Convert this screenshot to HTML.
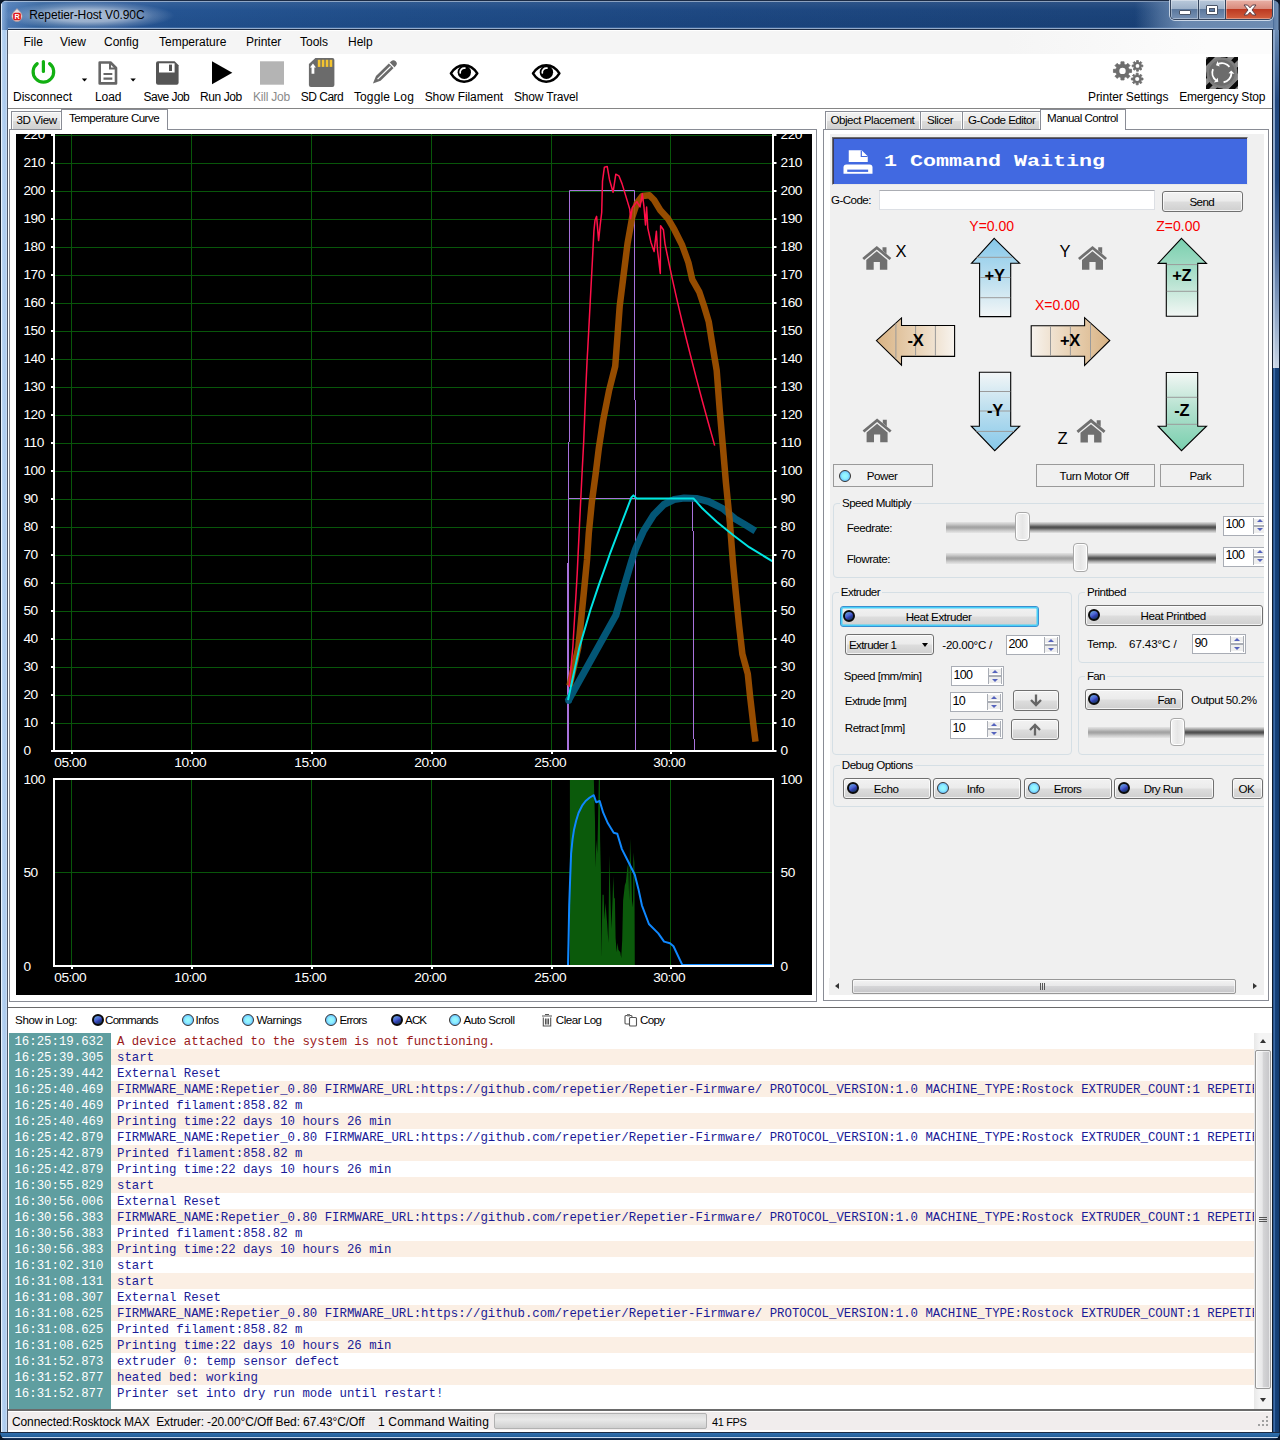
<!DOCTYPE html>
<html lang="en"><head><meta charset="utf-8"><title>Repetier-Host V0.90C</title>
<style>
*{box-sizing:border-box;margin:0;padding:0}
html,body{width:1280px;height:1440px;overflow:hidden;background:#16427a}
body{position:relative;font-family:"Liberation Sans",sans-serif;font-size:12px;color:#000}
.a{position:absolute}
.ui{font-family:"Liberation Sans",sans-serif;font-size:12px;white-space:nowrap}
.ms{font-family:"Liberation Sans",sans-serif;font-size:11.6px;letter-spacing:-0.5px;white-space:nowrap;color:#000}
.mono{font-family:"Liberation Mono",monospace}
.tl{position:absolute;white-space:nowrap;font-size:12px;text-align:center;top:90px;height:14px;line-height:14px}
.btn{position:absolute;border:1px solid #707070;border-radius:3px;background:linear-gradient(#f2f2f2 0%,#ebebeb 48%,#dddddd 52%,#cfcfcf 100%);box-shadow:inset 0 0 0 1px rgba(255,255,255,.75);text-align:center}
.flat{position:absolute;border:1px solid #9a9a9a;background:#f0f0f0;text-align:center}
.led{position:absolute;width:12px;height:12px;border-radius:50%;border:2.1px solid #0a0a0a}
.on{background:linear-gradient(150deg,#5e90d6 18%,#4a60d2 46%,#3342b4 58%,#16385e 88%)}
.off{background:radial-gradient(circle at 50% 50%,#98fbff 0%,#8eeeff 40%,#4a98ff 100%);border-color:#333;border-width:1.6px}
.grp{position:absolute;border:1px solid #d5dfe5;border-radius:4px}
.grp>span{position:absolute;top:-8px;left:6px;background:#f0f0f0;padding:0 2px;line-height:14px}
.num{position:absolute;background:#fff;border:1px solid #a9adb5;height:20px}
.num>span{position:absolute;left:1.5px;top:1.5px;line-height:13px;font-size:12.5px;letter-spacing:-0.75px}
.num>i{position:absolute;right:1px;top:1px;bottom:1px;width:14px;border-left:1px solid #a9adb5;border-right:1px solid #a9adb5;background:linear-gradient(#fff 0,#fff 1px,#eeeeee 1px,#eeeeee 6px,#fff 6px,#fff 7.2px,#a9adb5 7.2px,#a9adb5 8.8px,#fff 8.8px,#fff 9.5px,#eeeeee 9.5px,#eeeeee 15px,#fff 15px)}
.num>i:before{content:"";position:absolute;left:2.8px;top:1.8px;border:3.2px solid transparent;border-top:0;border-bottom:3.4px solid #5563bd}
.num>i:after{content:"";position:absolute;left:2.8px;bottom:2.4px;border:3.2px solid transparent;border-bottom:0;border-top:3.4px solid #5563bd}
.num>b{display:none}
.trk{position:absolute;height:11px}
.thumb{position:absolute;width:15px;height:28.6px;border:1px solid #a8a8a8;border-radius:4px;background:linear-gradient(90deg,#f4f4f4,#e6e6e6 50%,#f4f4f4);box-shadow:inset 0 0 0 1px #fff}
.tab{position:absolute;border:1px solid #898c95;border-bottom:none;box-shadow:inset 1px 1px 0 #fcfcfc,inset -1px 0 0 #fcfcfc;background:linear-gradient(#f2f2f2,#ebebeb 50%,#dddddd 50%,#d0d0d0);text-align:center;line-height:16px}
.tabsel{position:absolute;border:1px solid #898c95;border-bottom:none;background:#fff;text-align:center;line-height:17px}
</style></head><body>
<div class="a" style="left:0;top:0;width:1280px;height:30px;background:linear-gradient(90deg,#5a84bc 0px,#4a78b4 12px,#35659f 40px,#2c5a99 120px,#215190 170px,#1d4b87 400px,#1a4580 700px,#173f75 1280px)"></div><div class="a" style="left:0;top:0;width:1280px;height:30px;background:linear-gradient(180deg,rgba(255,255,255,.10) 0,rgba(255,255,255,.02) 10px,rgba(0,0,0,.04) 30px)"></div><div class="a" style="left:0;top:0;width:1280px;height:1px;background:#1b2b45"></div><div class="a" style="left:1px;top:1px;width:1278px;height:1px;background:rgba(255,255,255,.45)"></div><div class="a" style="left:0;top:30px;width:8px;height:1402px;background:linear-gradient(90deg,#141d2a 0,#141d2a 1px,#e8f1fb 1px,#e8f1fb 2px,#bcd6f3 2px,#a9c9ed 5px,#c4d9f2 6.5px,#c4d9f2 7px,#4c5566 7px,#4c5566 8px)"></div><div class="a" style="left:0;top:0px;width:8px;height:30px;background:linear-gradient(90deg,#141d2a 0,#141d2a 1px,#dfeaf8 1px,#dfeaf8 2px,rgba(160,195,235,.6) 2px,rgba(120,160,210,0) 8px)"></div><div class="a" style="left:1272px;top:30px;width:8px;height:338px;background:#1a2433"></div><div class="a" style="left:1273px;top:30px;width:2px;height:338px;background:linear-gradient(180deg,#8ba6ca 0,#95afd0 60%,#b4c6de 85%,#d4deec 100%)"></div><div class="a" style="left:1275px;top:30px;width:4px;height:338px;background:linear-gradient(180deg,#6e8cb2 0,#4a6c9c 30px,#24497f 70px,#1e457c 150px,#4d6c9c 220px,#9fb3cf 300px,#c9d5e5 338px)"></div><div class="a" style="left:1279px;top:30px;width:1px;height:338px;background:#0e1a2c"></div><div class="a" style="left:1272px;top:368px;width:8px;height:1064px;background:linear-gradient(90deg,#101c2e 0,#101c2e 1px,#16427a 1px,#3c6aa5 2px,#3c6aa5 3px,#16427a 3.5px,#143c70 7px,#0c2240 7px)"></div><div class="a" style="left:1272px;top:0;width:8px;height:30px;background:linear-gradient(90deg,rgba(0,0,0,0) 0,#5f7fa8 2px,#6f8fb5 6px,#1f2f48 7px)"></div><div class="a" style="left:0;top:1432px;width:1280px;height:8px;background:linear-gradient(180deg,#1c2c44 0,#1c2c44 1px,#2f6fae 1px,#27649f 4px,#1f5a96 5.5px,#c9dcf0 5.5px,#c9dcf0 6.5px,#16325a 6.5px,#0d1e38 8px)"></div><svg class="a" style="left:0;top:0" width="1280" height="1440"><path d="M0 0H8A8 8 0 0 0 0 8Z" fill="#0a1628"/><path d="M1280 0H1272A8 8 0 0 1 1280 8Z" fill="#0a1628"/><path d="M0 1440H8A8 8 0 0 1 0 1432Z" fill="#0a1628"/><path d="M1280 1440H1272A8 8 0 0 0 1280 1432Z" fill="#0a1628"/></svg><div class="a" style="left:8px;top:30px;width:1264px;height:1402px;background:#fff"></div>
<div class="a" style="left:6px;top:1px;width:176px;height:28px;background:radial-gradient(ellipse 86px 14px at 47% 52%,rgba(255,255,255,.6) 0,rgba(255,255,255,.5) 45%,rgba(255,255,255,.18) 75%,rgba(255,255,255,0) 100%)"></div><svg class="a" style="left:10.5px;top:8px" width="12" height="14" viewBox="0 0 14 16"><path d="M7 0.5C4.5 3.5 1 5.5 1 9.5A6 6 0 0 0 13 9.5C13 5.5 9.5 3.5 7 0.5Z" fill="#e8e0e0" stroke="#b09090" stroke-width=".8"/><rect x="2.5" y="5.5" width="9" height="8.5" rx="2" fill="#e01818"/><text x="7" y="13" font-family="Liberation Sans,sans-serif" font-weight="bold" font-size="8.5" fill="#fff" text-anchor="middle">R</text></svg><div class="a ui" style="left:29.2px;top:8px;line-height:15px;letter-spacing:-0.105px;color:#000">Repetier-Host V0.90C</div><div class="a" style="left:1135px;top:1px;width:138px;height:28px;background:linear-gradient(90deg,rgba(110,140,178,0) 0,rgba(110,140,178,.55) 25px,rgba(110,140,178,.95) 48px,#6e8cb2 100%)"></div><div class="a" style="left:1169px;top:0;width:105px;height:21px;border:1px solid rgba(235,242,250,.75);border-top:none;border-radius:0 0 6px 6px"></div><div class="a" style="left:1170px;top:0;width:103px;height:20px;border:1px solid #33435c;border-top:none;border-radius:0 0 5px 5px;overflow:hidden"><div class="a" style="left:0;top:0;width:28px;height:19px;background:linear-gradient(#b9c9db 0,#9db1c9 46%,#5b789d 50%,#7791b4 100%);border-right:1px solid #33435c;box-shadow:inset 0 0 0 1px rgba(255,255,255,.35)"></div><div class="a" style="left:28px;top:0;width:27px;height:19px;background:linear-gradient(#b9c9db 0,#9db1c9 46%,#5b789d 50%,#7791b4 100%);border-right:1px solid #33435c;box-shadow:inset 0 0 0 1px rgba(255,255,255,.35)"></div><div class="a" style="left:55px;top:0;width:47px;height:19px;background:linear-gradient(#e9b1a6 0,#d98b7c 46%,#bd3a22 50%,#d3603f 100%);box-shadow:inset 0 0 0 1px rgba(255,255,255,.35)"></div></div><div class="a" style="left:1179px;top:10px;width:12px;height:5px;background:#fff;border:1px solid #4a5568;border-radius:1px"></div><div class="a" style="left:1206px;top:5px;width:12px;height:10px;border:1px solid #4a5568;background:#fff;border-radius:1px"></div><div class="a" style="left:1209px;top:8px;width:6px;height:4px;border:1px solid #4a5568;background:#5f7ca4"></div><svg class="a" style="left:1240.5px;top:3px" width="18" height="14" viewBox="0 0 18 14"><path d="M3 2L6.5 2L9 4.8L11.5 2L15 2L11 7L15 12L11.5 12L9 9.2L6.5 12L3 12L7 7Z" fill="#fff" stroke="#5a4048" stroke-width="1"/></svg>
<div class="a" style="left:8px;top:31px;width:1264px;height:23px;background:linear-gradient(90deg,#f5f5f5 0,#f5f5f5 1000px,#fcfcfc 1200px)"></div><div class="a" style="left:8px;top:29px;width:1265px;height:1px;background:#1d2c44"></div><div class="a" style="left:8px;top:28px;width:1265px;height:1px;background:rgba(200,215,235,.7)"></div><div class="a" style="left:8px;top:27px;width:1265px;height:1px;background:rgba(120,160,210,.25)"></div><div class="a ui" style="left:23.5px;top:35px;line-height:15px">File</div><div class="a ui" style="left:60px;top:35px;line-height:15px">View</div><div class="a ui" style="left:104px;top:35px;line-height:15px">Config</div><div class="a ui" style="left:159px;top:35px;line-height:15px">Temperature</div><div class="a ui" style="left:246px;top:35px;line-height:15px">Printer</div><div class="a ui" style="left:300px;top:35px;line-height:15px">Tools</div><div class="a ui" style="left:348px;top:35px;line-height:15px">Help</div>
<div class="a" style="left:8px;top:108px;width:1264px;height:1px;background:#858585"></div><div class="a ui" style="left:13.1px;top:90px;line-height:14px;letter-spacing:-0.048px;color:#000">Disconnect</div><div class="a ui" style="left:95.1px;top:90px;line-height:14px;letter-spacing:-0.151px;color:#000">Load</div><div class="a ui" style="left:143.6px;top:90px;line-height:14px;letter-spacing:-0.556px;color:#000">Save Job</div><div class="a ui" style="left:199.9px;top:90px;line-height:14px;letter-spacing:-0.386px;color:#000">Run Job</div><div class="a ui" style="left:253.1px;top:90px;line-height:14px;letter-spacing:-0.236px;color:#8a8a8a">Kill Job</div><div class="a ui" style="left:300.8px;top:90px;line-height:14px;letter-spacing:-0.509px;color:#000">SD Card</div><div class="a ui" style="left:353.9px;top:90px;line-height:14px;letter-spacing:0.138px;color:#000">Toggle Log</div><div class="a ui" style="left:424.7px;top:90px;line-height:14px;letter-spacing:-0.075px;color:#000">Show Filament</div><div class="a ui" style="left:514.0px;top:90px;line-height:14px;letter-spacing:-0.176px;color:#000">Show Travel</div><div class="a ui" style="left:1088.1px;top:90px;line-height:14px;letter-spacing:-0.115px;color:#000">Printer Settings</div><div class="a ui" style="left:1179.2px;top:90px;line-height:14px;letter-spacing:-0.187px;color:#000">Emergency Stop</div><svg class="a" style="left:0;top:54px" width="1280" height="54" viewBox="0 54 1280 54"><path d="M37.2 63.6A10.3 10.3 0 1 0 49.6 63.6" fill="none" stroke="#12b012" stroke-width="3.2" stroke-linecap="round"/><path d="M43.4 61.6V71.4" stroke="#12b012" stroke-width="3.2" stroke-linecap="round"/><path d="M81.8 78.6h5.4l-2.7 2.9z" fill="#000"/><path d="M130.4 78.6h5.4l-2.7 2.9z" fill="#000"/><path d="M99.7 62.5H110.5L116 68V83.4H99.7Z" fill="#fff" stroke="#666" stroke-width="2.6" stroke-linejoin="round"/><path d="M110 62.5V68.5H116" fill="none" stroke="#666" stroke-width="2"/><path d="M103.5 74H112.3M103.5 78.7H112.3" stroke="#666" stroke-width="2.2"/><path d="M156 63.2a2 2 0 0 1 2-2H174.6L178.6 65.2V82.7a2 2 0 0 1-2 2H158a2 2 0 0 1-2-2Z" fill="#555"/><rect x="159" y="63.3" width="15.6" height="9.2" fill="#fff"/><rect x="169" y="64.6" width="3" height="6.4" fill="#555"/><path d="M212 61.3L232.3 72.7L212 84.2Z" fill="#000"/><rect x="260" y="61.3" width="24" height="23.4" fill="#b4b4b4"/><path d="M315.4 57.9H332.4a2 2 0 0 1 2 2V85a2 2 0 0 1-2 2H310.9a2 2 0 0 1-2-2V64Z" fill="#6b6b6b"/><rect x="317.80" y="59.8" width="2.6" height="7.1" fill="#f4c430"/><rect x="321.75" y="59.8" width="2.6" height="7.1" fill="#f4c430"/><rect x="325.70" y="59.8" width="2.6" height="7.1" fill="#f4c430"/><rect x="329.65" y="59.8" width="2.6" height="7.1" fill="#f4c430"/><path d="M312.95 63.4l3 4.2h-1.6v6.1h-2.8v-6.1h-1.6z" fill="#fff"/><g transform="translate(372.9,83.6) rotate(-44.2)"><path d="M0 0L7.5 -3.3H28.6a3.3 3.3 0 0 1 0 6.6H7.5Z" fill="#6b6b6b"/><path d="M6.5 0H24.6" stroke="#fff" stroke-width="1.2"/><path d="M26.2 -3.6V3.6" stroke="#fff" stroke-width="1.3"/></g><path d="M450.90000000000003 73.4C457.6 62.4 470.6 62.4 477.3 73.4C470.6 84.4 457.6 84.4 450.90000000000003 73.4Z" fill="#fff" stroke="#000" stroke-width="2.5" stroke-linejoin="round"/><circle cx="464.3" cy="72.3" r="6.7" fill="#000"/><path d="M460.20000000000005 72.9A4.1 4.1 0 0 1 464.90000000000003 68.2" fill="none" stroke="#fff" stroke-width="1.7" stroke-linecap="round"/><path d="M533.0 73.4C539.7 62.4 552.7 62.4 559.4000000000001 73.4C552.7 84.4 539.7 84.4 533.0 73.4Z" fill="#fff" stroke="#000" stroke-width="2.5" stroke-linejoin="round"/><circle cx="546.4000000000001" cy="72.3" r="6.7" fill="#000"/><path d="M542.3000000000001 72.9A4.1 4.1 0 0 1 547.0 68.2" fill="none" stroke="#fff" stroke-width="1.7" stroke-linecap="round"/><path d="M1131.56 69.32L1131.56 72.48L1129.11 72.49L1128.30 74.45L1130.03 76.19L1127.79 78.43L1126.05 76.70L1124.09 77.51L1124.08 79.96L1120.92 79.96L1120.91 77.51L1118.95 76.70L1117.21 78.43L1114.97 76.19L1116.70 74.45L1115.89 72.49L1113.44 72.48L1113.44 69.32L1115.89 69.31L1116.70 67.35L1114.97 65.61L1117.21 63.37L1118.95 65.10L1120.91 64.29L1120.92 61.84L1124.08 61.84L1124.09 64.29L1126.05 65.10L1127.79 63.37L1130.03 65.61L1128.30 67.35L1129.11 69.31Z" fill="#6e6e6e" stroke="#6e6e6e" stroke-width=".8" stroke-linejoin="round"/><circle cx="1122.5" cy="70.9" r="3.2" fill="#fff"/><path d="M1142.82 64.97L1142.82 66.83L1141.29 66.81L1140.83 67.94L1141.92 69.01L1140.61 70.32L1139.54 69.23L1138.41 69.69L1138.43 71.22L1136.57 71.22L1136.59 69.69L1135.46 69.23L1134.39 70.32L1133.08 69.01L1134.17 67.94L1133.71 66.81L1132.18 66.83L1132.18 64.97L1133.71 64.99L1134.17 63.86L1133.08 62.79L1134.39 61.48L1135.46 62.57L1136.59 62.11L1136.57 60.58L1138.43 60.58L1138.41 62.11L1139.54 62.57L1140.61 61.48L1141.92 62.79L1140.83 63.86L1141.29 64.99Z" fill="#6e6e6e" stroke="#6e6e6e" stroke-width=".8" stroke-linejoin="round"/><circle cx="1137.5" cy="65.9" r="1.9" fill="#fff"/><path d="M1143.01 77.99L1143.01 80.01L1141.28 79.98L1140.78 81.19L1142.03 82.39L1140.59 83.83L1139.39 82.58L1138.18 83.08L1138.21 84.81L1136.19 84.81L1136.22 83.08L1135.01 82.58L1133.81 83.83L1132.37 82.39L1133.62 81.19L1133.12 79.98L1131.39 80.01L1131.39 77.99L1133.12 78.02L1133.62 76.81L1132.37 75.61L1133.81 74.17L1135.01 75.42L1136.22 74.92L1136.19 73.19L1138.21 73.19L1138.18 74.92L1139.39 75.42L1140.59 74.17L1142.03 75.61L1140.78 76.81L1141.28 78.02Z" fill="#6e6e6e" stroke="#6e6e6e" stroke-width=".8" stroke-linejoin="round"/><circle cx="1137.2" cy="79" r="2.1" fill="#fff"/><defs><clipPath id="ec"><rect x="1206" y="57" width="32" height="32"/></clipPath></defs><g clip-path="url(#ec)"><rect x="1206" y="57" width="32" height="32" fill="#0a0a0a"/><path d="M1170 89L1202 57H1208.5L1176.5 89Z" fill="#8d8d8d"/><path d="M1183 89L1215 57H1221.5L1189.5 89Z" fill="#8d8d8d"/><path d="M1196 89L1228 57H1234.5L1202.5 89Z" fill="#8d8d8d"/><path d="M1209 89L1241 57H1247.5L1215.5 89Z" fill="#8d8d8d"/><path d="M1222 89L1254 57H1260.5L1228.5 89Z" fill="#8d8d8d"/><path d="M1235 89L1267 57H1273.5L1241.5 89Z" fill="#8d8d8d"/><path d="M1248 89L1280 57H1286.5L1254.5 89Z" fill="#8d8d8d"/><path d="M1261 89L1293 57H1299.5L1267.5 89Z" fill="#8d8d8d"/><path d="M1274 89L1306 57H1312.5L1280.5 89Z" fill="#8d8d8d"/><circle cx="1221.9" cy="72.8" r="15.6" fill="#7e7e7e"/><circle cx="1221.9" cy="72.8" r="13" fill="#6c6c6c"/><path d="M1223.57 82.25A9.6 9.6 0 0 0 1231.49 73.14" fill="none" stroke="#fff" stroke-width="1.8"/><path d="M1231.21 70.48L1234.47 73.68L1228.48 73.26Z" fill="#fff"/><path d="M1229.46 66.89A9.6 9.6 0 0 0 1218.30 63.90" fill="none" stroke="#fff" stroke-width="1.8"/><path d="M1215.99 65.24L1217.59 60.96L1219.64 66.60Z" fill="#fff"/><path d="M1213.00 69.20A9.6 9.6 0 0 0 1215.99 80.36" fill="none" stroke="#fff" stroke-width="1.8"/><path d="M1218.30 81.70L1213.80 82.45L1217.66 77.86Z" fill="#fff"/></g></svg>
<div class="a" style="left:9px;top:129px;width:808px;height:873px;border:1px solid #898c95;background:#fff"></div><div class="tab" style="left:11px;top:111px;width:51px;height:18px"></div><div class="a ms" style="left:16.4px;top:113px;line-height:14px;letter-spacing:-0.374px;">3D View</div><div class="tabsel" style="left:61px;top:109px;width:107px;height:21px"></div><div class="a ms" style="left:69.1px;top:111.3px;line-height:14px;letter-spacing:-0.543px;">Temperature Curve</div><svg class="a" style="left:16px;top:134px" width="796" height="861" viewBox="16 134 796 861" font-family="Liberation Sans,sans-serif" font-size="13.7" letter-spacing="-0.5"><rect x="16" y="134" width="796" height="861" fill="#000"/><path d="M55 723.5H772" stroke="#08560a" stroke-width="1"/><path d="M55 695.5H772" stroke="#08560a" stroke-width="1"/><path d="M55 667.5H772" stroke="#08560a" stroke-width="1"/><path d="M55 639.5H772" stroke="#08560a" stroke-width="1"/><path d="M55 611.5H772" stroke="#08560a" stroke-width="1"/><path d="M55 583.5H772" stroke="#08560a" stroke-width="1"/><path d="M55 555.5H772" stroke="#08560a" stroke-width="1"/><path d="M55 527.5H772" stroke="#08560a" stroke-width="1"/><path d="M55 499.5H772" stroke="#08560a" stroke-width="1"/><path d="M55 471.5H772" stroke="#08560a" stroke-width="1"/><path d="M55 443.5H772" stroke="#08560a" stroke-width="1"/><path d="M55 415.5H772" stroke="#08560a" stroke-width="1"/><path d="M55 387.5H772" stroke="#08560a" stroke-width="1"/><path d="M55 359.5H772" stroke="#08560a" stroke-width="1"/><path d="M55 331.5H772" stroke="#08560a" stroke-width="1"/><path d="M55 303.5H772" stroke="#08560a" stroke-width="1"/><path d="M55 275.5H772" stroke="#08560a" stroke-width="1"/><path d="M55 247.5H772" stroke="#08560a" stroke-width="1"/><path d="M55 219.5H772" stroke="#08560a" stroke-width="1"/><path d="M55 191.5H772" stroke="#08560a" stroke-width="1"/><path d="M55 163.5H772" stroke="#08560a" stroke-width="1"/><path d="M55 135.5H772" stroke="#08560a" stroke-width="1"/><path d="M71.50 134V750" stroke="#08560a" stroke-width="1"/><path d="M71.50 780V965" stroke="#08560a" stroke-width="1"/><path d="M191.50 134V750" stroke="#08560a" stroke-width="1"/><path d="M191.50 780V965" stroke="#08560a" stroke-width="1"/><path d="M311.50 134V750" stroke="#08560a" stroke-width="1"/><path d="M311.50 780V965" stroke="#08560a" stroke-width="1"/><path d="M431.50 134V750" stroke="#08560a" stroke-width="1"/><path d="M431.50 780V965" stroke="#08560a" stroke-width="1"/><path d="M551.50 134V750" stroke="#08560a" stroke-width="1"/><path d="M551.50 780V965" stroke="#08560a" stroke-width="1"/><path d="M670.50 134V750" stroke="#08560a" stroke-width="1"/><path d="M670.50 780V965" stroke="#08560a" stroke-width="1"/><path d="M55 872.5H772" stroke="#08560a" stroke-width="1"/><path d="M569.5 442V190.5H634.5V400M635.5 400V750M568.5 563V442M568.5 498.5H692.5" fill="none" stroke="#a872dc" stroke-width="1"/><path d="M568 750V563" fill="none" stroke="#a872dc" stroke-width="2"/><path d="M692.5 498.5V531M693.5 531V739M694.5 739V750" fill="none" stroke="#a872dc" stroke-width="1"/><path d="M569.9 965.1 L569.9 779.2 L593.8 779.2 L595.0 820.9 L595.5 867.8 L596.4 839.7 L597.3 853.7 L599.0 779.2 L599.7 779.2 L600.1 839.7 L600.9 872.5 L601.3 956.9 L602.5 894.8 L603.7 894.8 L604.4 919.4 L605.5 903.0 L607.2 924.0 L608.4 942.8 L609.3 854.9 L610.0 881.9 L611.4 928.7 L612.6 898.3 L613.3 876.0 L614.2 898.3 L614.9 898.3 L615.6 938.1 L616.6 952.2 L617.5 942.8 L618.4 949.8 L620.3 952.2 L621.2 958.0 L622.2 940.5 L623.1 900.6 L624.8 885.4 L625.9 881.9 L627.3 867.8 L628.3 863.1 L629.2 900.6 L630.1 838.5 L631.1 867.8 L632.0 900.6 L633.0 907.6 L633.4 852.6 L634.4 863.1 L634.8 965.1Z" fill="#0b5a0b"/><path d="M599.3 780V850" stroke="#0b5a0b" stroke-width="1"/><path d="M568.0 965.1 L568.5 942.8 L569.2 905.3 L570.2 877.2 L571.1 853.7 L572.5 839.7 L573.9 830.3 L576.2 820.5 L578.6 812.7 L582.1 805.7 L585.6 801.0 L589.8 797.5 L593.8 795.2 L596.2 802.2 L599.7 801.0 L603.2 812.7 L607.9 823.3 L613.7 832.7 L617.3 833.8 L621.9 849.1 L627.8 860.8 L634.8 874.8 L638.4 888.9 L641.9 905.3 L648.9 924.0 L658.3 933.4 L664.1 941.6 L670.0 943.3 L673.5 946.3 L682.4 965.1 L773.1 965.1" fill="none" stroke="#0f88ff" stroke-width="2" stroke-linejoin="round"/><g opacity=".92"><path d="M567.8 701.5 L615.9 615.3 L622.2 592.8 L631.9 560.0 L635.5 549.2 L643.6 530.9 L653.8 514.7 L663.9 504.5 L674.1 499.5 L684.2 498.0 L696.4 498.4 L708.6 501.5 L722.8 508.6 L735.0 518.8 L745.2 524.8 L755.3 530.9" fill="none" stroke="#045e80" stroke-width="7" stroke-linejoin="round"/><circle cx="568.6" cy="700.6" r="3.4" fill="#045e80"/></g><path d="M569.5 685.8 L578.3 647.5 L583.8 592.8 L587.0 560.0 L588.8 533.0 L591.8 502.5 L595.9 472.0 L598.9 447.7 L603.0 421.2 L609.0 390.8 L615.2 366.4 L617.2 340.0 L619.7 306.2 L623.6 275.0 L627.5 243.8 L632.2 217.2 L636.9 203.1 L642.3 196.1 L649.4 195.3 L654.1 200.0 L660.3 210.2 L668.1 218.8 L674.4 229.7 L682.2 245.3 L688.4 262.5 L692.3 279.7 L699.4 292.2 L704.1 306.2 L708.8 321.9 L711.6 340.0 L716.7 370.5 L719.8 411.1 L722.8 445.6 L725.9 482.2 L729.9 522.8 L733.0 563.4 L735.8 592.8 L739.1 625.6 L742.4 654.1 L747.8 673.8 L750.0 695.6 L753.3 724.1 L755.5 741.6" fill="none" stroke="#a65400" stroke-width="6.5" stroke-linejoin="round" opacity=".9"/><path d="M568.0 700.0 L579.4 647.5 L590.3 610.3 L599.1 584.1 L607.8 560.0 L610.1 553.3 L620.5 526.0 L631.4 497.4 L633.4 495.4 L636.5 498.4 L693.4 498.4 L702.5 508.6 L716.7 521.8 L733.0 535.0 L749.2 547.2 L772.6 561.4" fill="none" stroke="#00e4e4" stroke-width="2" stroke-linejoin="round"/><path d="M569.1 686.9 L572.8 647.5 L576.1 592.8 L577.2 573.6 L579.6 522.8 L581.6 482.2 L583.7 441.6 L585.7 390.8 L587.1 360.3 L587.7 350.0 L590.0 306.2 L592.3 262.5 L593.9 231.2 L595.0 220.3 L596.6 216.4 L598.6 240.6 L600.2 225.0 L601.7 212.5 L602.5 181.2 L604.4 167.2 L607.2 166.4 L609.5 179.7 L613.1 192.2 L615.8 174.2 L618.9 175.8 L622.0 183.6 L627.5 201.6 L629.8 209.4 L630.6 218.8 L632.2 207.8 L636.9 201.6 L640.0 207.0 L642.3 193.8 L643.9 206.2 L645.5 225.0 L646.6 207.0 L647.8 228.1 L650.9 242.2 L654.1 251.6 L656.4 231.2 L657.5 250.0 L660.3 273.4 L660.6 225.8 L663.4 229.7 L665.0 243.8 L668.6 261.3 L672.4 279.4 L676.6 298.1 L681.1 317.4 L685.9 337.3 L691.1 357.8 L696.5 378.9 L702.2 400.5 L708.3 422.8 L714.7 445.6" fill="none" stroke="#ff1048" stroke-width="1.5" stroke-linejoin="round"/><path d="M54 134V752M773 134V752M53 751H774" stroke="#fff" stroke-width="2" fill="none"/><path d="M51 751H54M774 751H776.5" stroke="#fff" stroke-width="2"/><path d="M51 723H54M774 723H776.5" stroke="#fff" stroke-width="2"/><path d="M51 695H54M774 695H776.5" stroke="#fff" stroke-width="2"/><path d="M51 667H54M774 667H776.5" stroke="#fff" stroke-width="2"/><path d="M51 639H54M774 639H776.5" stroke="#fff" stroke-width="2"/><path d="M51 611H54M774 611H776.5" stroke="#fff" stroke-width="2"/><path d="M51 583H54M774 583H776.5" stroke="#fff" stroke-width="2"/><path d="M51 555H54M774 555H776.5" stroke="#fff" stroke-width="2"/><path d="M51 527H54M774 527H776.5" stroke="#fff" stroke-width="2"/><path d="M51 499H54M774 499H776.5" stroke="#fff" stroke-width="2"/><path d="M51 471H54M774 471H776.5" stroke="#fff" stroke-width="2"/><path d="M51 443H54M774 443H776.5" stroke="#fff" stroke-width="2"/><path d="M51 415H54M774 415H776.5" stroke="#fff" stroke-width="2"/><path d="M51 387H54M774 387H776.5" stroke="#fff" stroke-width="2"/><path d="M51 359H54M774 359H776.5" stroke="#fff" stroke-width="2"/><path d="M51 331H54M774 331H776.5" stroke="#fff" stroke-width="2"/><path d="M51 303H54M774 303H776.5" stroke="#fff" stroke-width="2"/><path d="M51 275H54M774 275H776.5" stroke="#fff" stroke-width="2"/><path d="M51 247H54M774 247H776.5" stroke="#fff" stroke-width="2"/><path d="M51 219H54M774 219H776.5" stroke="#fff" stroke-width="2"/><path d="M51 191H54M774 191H776.5" stroke="#fff" stroke-width="2"/><path d="M51 163H54M774 163H776.5" stroke="#fff" stroke-width="2"/><path d="M51 135H54M774 135H776.5" stroke="#fff" stroke-width="2"/><path d="M72.00 752V754M72.00 967V969" stroke="#fff" stroke-width="2"/><path d="M192.00 752V754M192.00 967V969" stroke="#fff" stroke-width="2"/><path d="M312.00 752V754M312.00 967V969" stroke="#fff" stroke-width="2"/><path d="M432.00 752V754M432.00 967V969" stroke="#fff" stroke-width="2"/><path d="M552.00 752V754M552.00 967V969" stroke="#fff" stroke-width="2"/><path d="M671.00 752V754M671.00 967V969" stroke="#fff" stroke-width="2"/><rect x="54" y="779" width="719" height="187" fill="none" stroke="#fff" stroke-width="2"/><text x="23.5" y="754.7" fill="#fff">0</text><text x="780.6" y="754.7" fill="#fff">0</text><text x="23.5" y="726.7" fill="#fff">10</text><text x="780.6" y="726.7" fill="#fff">10</text><text x="23.5" y="698.7" fill="#fff">20</text><text x="780.6" y="698.7" fill="#fff">20</text><text x="23.5" y="670.7" fill="#fff">30</text><text x="780.6" y="670.7" fill="#fff">30</text><text x="23.5" y="642.7" fill="#fff">40</text><text x="780.6" y="642.7" fill="#fff">40</text><text x="23.5" y="614.7" fill="#fff">50</text><text x="780.6" y="614.7" fill="#fff">50</text><text x="23.5" y="586.7" fill="#fff">60</text><text x="780.6" y="586.7" fill="#fff">60</text><text x="23.5" y="558.7" fill="#fff">70</text><text x="780.6" y="558.7" fill="#fff">70</text><text x="23.5" y="530.7" fill="#fff">80</text><text x="780.6" y="530.7" fill="#fff">80</text><text x="23.5" y="502.7" fill="#fff">90</text><text x="780.6" y="502.7" fill="#fff">90</text><text x="23.5" y="474.7" fill="#fff">100</text><text x="780.6" y="474.7" fill="#fff">100</text><text x="23.5" y="446.7" fill="#fff">110</text><text x="780.6" y="446.7" fill="#fff">110</text><text x="23.5" y="418.7" fill="#fff">120</text><text x="780.6" y="418.7" fill="#fff">120</text><text x="23.5" y="390.7" fill="#fff">130</text><text x="780.6" y="390.7" fill="#fff">130</text><text x="23.5" y="362.7" fill="#fff">140</text><text x="780.6" y="362.7" fill="#fff">140</text><text x="23.5" y="334.7" fill="#fff">150</text><text x="780.6" y="334.7" fill="#fff">150</text><text x="23.5" y="306.7" fill="#fff">160</text><text x="780.6" y="306.7" fill="#fff">160</text><text x="23.5" y="278.7" fill="#fff">170</text><text x="780.6" y="278.7" fill="#fff">170</text><text x="23.5" y="250.7" fill="#fff">180</text><text x="780.6" y="250.7" fill="#fff">180</text><text x="23.5" y="222.7" fill="#fff">190</text><text x="780.6" y="222.7" fill="#fff">190</text><text x="23.5" y="194.7" fill="#fff">200</text><text x="780.6" y="194.7" fill="#fff">200</text><text x="23.5" y="166.7" fill="#fff">210</text><text x="780.6" y="166.7" fill="#fff">210</text><text x="23.5" y="138.7" fill="#fff">220</text><text x="780.6" y="138.7" fill="#fff">220</text><text x="23.5" y="783.6" fill="#fff">100</text><text x="780.6" y="783.6" fill="#fff">100</text><text x="23.5" y="876.6" fill="#fff">50</text><text x="780.6" y="876.6" fill="#fff">50</text><text x="23.5" y="970.6" fill="#fff">0</text><text x="780.6" y="970.6" fill="#fff">0</text><text x="54.3" y="767.3" fill="#fff">05:00</text><text x="54.3" y="982" fill="#fff">05:00</text><text x="174.3" y="767.3" fill="#fff">10:00</text><text x="174.3" y="982" fill="#fff">10:00</text><text x="294.3" y="767.3" fill="#fff">15:00</text><text x="294.3" y="982" fill="#fff">15:00</text><text x="414.3" y="767.3" fill="#fff">20:00</text><text x="414.3" y="982" fill="#fff">20:00</text><text x="534.3" y="767.3" fill="#fff">25:00</text><text x="534.3" y="982" fill="#fff">25:00</text><text x="653.3" y="767.3" fill="#fff">30:00</text><text x="653.3" y="982" fill="#fff">30:00</text></svg>
<div class="a" style="left:823px;top:129px;width:446px;height:872px;border:1px solid #898c95;background:#fff"></div><div class="a" style="left:830px;top:134px;width:434px;height:861px;background:#f0f0f0;overflow:hidden" id="rp"></div><div class="tab" style="left:825px;top:111px;width:96px;height:18px"></div><div class="a ms" style="left:830.4px;top:113px;line-height:14px;letter-spacing:-0.470px;">Object Placement</div><div class="tab" style="left:920px;top:111px;width:43px;height:18px"></div><div class="a ms" style="left:927.0px;top:113px;line-height:14px;letter-spacing:-0.500px;">Slicer</div><div class="tab" style="left:962px;top:111px;width:79px;height:18px"></div><div class="a ms" style="left:968.1px;top:113px;line-height:14px;letter-spacing:-0.535px;">G-Code Editor</div><div class="tabsel" style="left:1040px;top:109px;width:86px;height:21px"></div><div class="a ms" style="left:1047.1px;top:111.3px;line-height:14px;letter-spacing:-0.559px;">Manual Control</div><div class="a" style="left:832px;top:137px;width:416px;height:48px;background:#4169e1;border:1px solid;border-color:#6d6d6d #e8e8e8 #e8e8e8 #6d6d6d;box-shadow:inset 1px 1px 0 #3a3a5a"></div><svg class="a" style="left:840px;top:146px" width="40" height="32" viewBox="840 146 40 32"><path d="M848.75 150.25H861.6L867.75 156.2V162H848.75Z" fill="#fff"/><path d="M861.3 150.4V156.5H867.6" fill="none" stroke="#4169e1" stroke-width="1.2"/><path d="M846.5 164.4H869.5a3 3 0 0 1 3 3V173.75H843.5V167.4a3 3 0 0 1 3-3Z" fill="#fff"/><rect x="847.25" y="169.6" width="20.9" height="2.3" fill="#4169e1"/></svg><div class="a mono" style="left:884.3px;top:149.5px;line-height:24px;font-size:17.25px;font-weight:bold;color:#fff;white-space:nowrap;transform:scale(1.256,1.0);transform-origin:0 50%">1 Command Waiting</div><div class="a ms" style="left:831.0px;top:193px;line-height:14px;letter-spacing:-0.575px;">G-Code:</div><div class="a" style="left:879px;top:190px;width:276px;height:20px;background:#fff;border:1px solid #dcdfe4;border-top-color:#abadb3"></div><div class="btn" style="left:1162px;top:191px;width:81px;height:21px"></div><div class="a ms" style="left:1189.5px;top:194.5px;line-height:14px;letter-spacing:-0.645px;">Send</div><svg class="a" style="left:829px;top:214px" width="435" height="250" viewBox="829 214 435 250" font-family="Liberation Sans,sans-serif"><defs>
<linearGradient id="gyu" x1="0" y1="0" x2="0" y2="1"><stop offset="0" stop-color="#86c8ea"/><stop offset=".55" stop-color="#bfe0ef"/><stop offset="1" stop-color="#f3f6f7"/></linearGradient>
<linearGradient id="gyd" x1="0" y1="1" x2="0" y2="0"><stop offset="0" stop-color="#86c8ea"/><stop offset=".55" stop-color="#bfe0ef"/><stop offset="1" stop-color="#f3f6f7"/></linearGradient>
<linearGradient id="gzu" x1="0" y1="0" x2="0" y2="1"><stop offset="0" stop-color="#79cfae"/><stop offset=".55" stop-color="#b6e2d0"/><stop offset="1" stop-color="#f3f7f5"/></linearGradient>
<linearGradient id="gzd" x1="0" y1="1" x2="0" y2="0"><stop offset="0" stop-color="#79cfae"/><stop offset=".55" stop-color="#b6e2d0"/><stop offset="1" stop-color="#f3f7f5"/></linearGradient>
<linearGradient id="gxl" x1="0" y1="0" x2="1" y2="0"><stop offset="0" stop-color="#d8b283"/><stop offset=".55" stop-color="#ead5ba"/><stop offset="1" stop-color="#f7f3ee"/></linearGradient>
<linearGradient id="gxr" x1="1" y1="0" x2="0" y2="0"><stop offset="0" stop-color="#d8b283"/><stop offset=".55" stop-color="#ead5ba"/><stop offset="1" stop-color="#f7f3ee"/></linearGradient>
</defs><path d="M994.2 238.4L1019.6 263.3H1010.7V316.6H979.6V263.3H971.5Z" fill="url(#gyu)" stroke="#000" stroke-width="1.1"/><path d="M976.5 257.3H1012M980 277.5H1010.3M980 297.7H1010.3" stroke="#9a9a9a" stroke-width="1"/><path d="M979.4 372.2H1010.7V426.2H1019.7L994.75 450.6L971.3 426.2H979.4Z" fill="url(#gyd)" stroke="#000" stroke-width="1.1"/><path d="M980 391.5H1010.3M980 411H1010.3M976.5 431.4H1014" stroke="#9a9a9a" stroke-width="1"/><path d="M1181.5 238.4L1206.5 263.4H1197.7V316.2H1166.3V263.4H1158.1Z" fill="url(#gzu)" stroke="#000" stroke-width="1.1"/><path d="M1166.8 264.6H1197.2M1166.8 291.3H1197.2" stroke="#9a9a9a" stroke-width="1"/><path d="M1166.3 372.5H1197.7V426.2H1206.5L1181.5 450.6L1158.1 426.2H1166.3Z" fill="url(#gzd)" stroke="#000" stroke-width="1.1"/><path d="M1166.8 397.3H1197.2M1166.8 424.3H1197.2" stroke="#9a9a9a" stroke-width="1"/><path d="M876.4 340.6L901.5 317.9V325.5H954.6V356.4H901.5V365.2Z" fill="url(#gxl)" stroke="#000" stroke-width="1.1"/><path d="M895.9 323.5V358.5M915.6 326V356M935.4 326V356" stroke="#9a9a9a" stroke-width="1"/><path d="M1031.2 325.8H1084.6V317.7L1109.8 340.4L1084.6 365.4V356.3H1031.2Z" fill="url(#gxr)" stroke="#000" stroke-width="1.1"/><path d="M1050.5 326.3V355.8M1070.4 326.3V355.8M1090.5 323.5V359" stroke="#9a9a9a" stroke-width="1"/><text x="994.6" y="280.8" font-size="16.5" font-weight="bold" text-anchor="middle" fill="#000" letter-spacing="-0.3">+Y</text><text x="995" y="416" font-size="16.5" font-weight="bold" text-anchor="middle" fill="#000" letter-spacing="-0.3">-Y</text><text x="1181.8" y="280.8" font-size="16.5" font-weight="bold" text-anchor="middle" fill="#000" letter-spacing="-0.3">+Z</text><text x="1181.8" y="416" font-size="16.5" font-weight="bold" text-anchor="middle" fill="#000" letter-spacing="-0.3">-Z</text><text x="915.5" y="345.8" font-size="16.5" font-weight="bold" text-anchor="middle" fill="#000" letter-spacing="-0.3">-X</text><text x="1070" y="345.8" font-size="16.5" font-weight="bold" text-anchor="middle" fill="#000" letter-spacing="-0.3">+X</text><text x="969.3" y="231.2" font-size="14" fill="#f80000">Y=0.00</text><text x="1156.3" y="231.2" font-size="14" fill="#f80000">Z=0.00</text><text x="1035" y="310.2" font-size="14" fill="#f80000">X=0.00</text><g transform="translate(862.3,245.7)" fill="#707070"><path d="M14.5 0.2L29 12.2L27.2 14.3L14.5 3.9L1.8 14.3L0 12.2Z"/><path d="M14.5 5.6L25 14.2V24H17.6V16.2H11.4V24H4V14.2Z"/><path d="M20.2 1.6H24.2V8.2L20.2 4.9Z"/></g><g transform="translate(1078,245.7)" fill="#707070"><path d="M14.5 0.2L29 12.2L27.2 14.3L14.5 3.9L1.8 14.3L0 12.2Z"/><path d="M14.5 5.6L25 14.2V24H17.6V16.2H11.4V24H4V14.2Z"/><path d="M20.2 1.6H24.2V8.2L20.2 4.9Z"/></g><g transform="translate(862.6,418.2)" fill="#707070"><path d="M14.5 0.2L29 12.2L27.2 14.3L14.5 3.9L1.8 14.3L0 12.2Z"/><path d="M14.5 5.6L25 14.2V24H17.6V16.2H11.4V24H4V14.2Z"/><path d="M20.2 1.6H24.2V8.2L20.2 4.9Z"/></g><g transform="translate(1076.5,418.6)" fill="#707070"><path d="M14.5 0.2L29 12.2L27.2 14.3L14.5 3.9L1.8 14.3L0 12.2Z"/><path d="M14.5 5.6L25 14.2V24H17.6V16.2H11.4V24H4V14.2Z"/><path d="M20.2 1.6H24.2V8.2L20.2 4.9Z"/></g><text x="895.5" y="256.8" font-size="16.5" fill="#000">X</text><text x="1059.5" y="256.8" font-size="16.5" fill="#000">Y</text><text x="1057.5" y="443.5" font-size="16.5" fill="#000">Z</text></svg><div class="flat" style="left:833px;top:464px;width:100px;height:23px"></div><div class="a ms" style="left:866.8px;top:468.5px;line-height:14px;letter-spacing:-0.445px;">Power</div><div class="led off" style="left:839px;top:470px"></div><div class="flat" style="left:1036px;top:464px;width:119px;height:23px"></div><div class="a ms" style="left:1059.5px;top:468.5px;line-height:14px;letter-spacing:-0.411px;">Turn Motor Off</div><div class="flat" style="left:1160px;top:464px;width:84px;height:23px"></div><div class="a ms" style="left:1189.5px;top:468.5px;line-height:14px;letter-spacing:-0.561px;">Park</div>
<div class="a" style="left:0;top:0;width:1264px;height:995px;overflow:hidden"><div class="grp" style="left:833px;top:503px;width:450px;height:75px"></div><div class="a ms" style="left:841.9px;top:495.5px;line-height:14px;letter-spacing:-0.496px;background:#f0f0f0;padding:0 2px;margin-left:-2px">Speed Multiply</div><div class="a ms" style="left:846.7px;top:521px;line-height:14px;letter-spacing:-0.469px;">Feedrate:</div><div class="a ms" style="left:846.7px;top:552px;line-height:14px;letter-spacing:-0.499px;">Flowrate:</div><div class="trk" style="left:946px;top:521.5px;width:76px;background:linear-gradient(#e4e4e4 0,#cacaca 20%,#a2a2a2 45%,#a6a6a6 55%,#cecece 80%,#e6e6e6 100%)"></div><div class="trk" style="left:1022px;top:521.5px;width:194px;background:linear-gradient(#e2e2e2 0,#a8a8a8 20%,#4e4e4e 45%,#545454 55%,#b0b0b0 80%,#e4e4e4 100%)"></div><div class="thumb" style="left:1015px;top:512.3px"></div><div class="trk" style="left:946px;top:552.5px;width:134px;background:linear-gradient(#e4e4e4 0,#cacaca 20%,#a2a2a2 45%,#a6a6a6 55%,#cecece 80%,#e6e6e6 100%)"></div><div class="trk" style="left:1080px;top:552.5px;width:136px;background:linear-gradient(#e2e2e2 0,#a8a8a8 20%,#4e4e4e 45%,#545454 55%,#b0b0b0 80%,#e4e4e4 100%)"></div><div class="thumb" style="left:1073px;top:543.3px"></div><div class="num ms" style="left:1223px;top:515.5px;width:46px;height:20px"><span>100</span><i></i><b></b></div><div class="num ms" style="left:1223px;top:546.5px;width:46px;height:20px"><span>100</span><i></i><b></b></div><div class="grp" style="left:832px;top:592px;width:240px;height:163px"></div><div class="a ms" style="left:840.8px;top:584.5px;line-height:14px;letter-spacing:-0.579px;background:#f0f0f0;padding:0 2px;margin-left:-2px">Extruder</div><div class="btn" style="left:840px;top:606px;width:199px;height:21px;border-color:#3a8fd0;box-shadow:inset 0 0 0 1.5px #48d0f8"></div><div class="a ms" style="left:905.7px;top:609.5px;line-height:14px;letter-spacing:-0.456px;">Heat Extruder</div><div class="led on" style="left:843px;top:610px"></div><div class="btn" style="left:845px;top:634px;width:89px;height:21px;"></div><div class="a ms" style="left:848.9px;top:637.5px;line-height:14px;letter-spacing:-0.590px;">Extruder 1</div><div class="a" style="left:921.5px;top:643px;border:3.5px solid transparent;border-bottom:0;border-top:4px solid #000"></div><div class="a ms" style="left:942.3px;top:637.5px;line-height:14px;letter-spacing:-0.263px;">-20.00°C /</div><div class="num ms" style="left:1006px;top:635px;width:54px;height:20px"><span>200</span><i></i><b></b></div><div class="a ms" style="left:843.8px;top:668.5px;line-height:14px;letter-spacing:-0.479px;">Speed [mm/min]</div><div class="num ms" style="left:951px;top:666px;width:53px;height:20px"><span>100</span><i></i><b></b></div><div class="a ms" style="left:844.8px;top:694px;line-height:14px;letter-spacing:-0.636px;">Extrude [mm]</div><div class="num ms" style="left:950px;top:692px;width:53px;height:20px"><span>10</span><i></i><b></b></div><div class="btn" style="left:1013px;top:690px;width:46px;height:21px;"></div><svg class="a" style="left:1027px;top:693px" width="18" height="15" viewBox="0 0 18 15"><path d="M9 1.5V11.5M4 7L9 12L14 7" fill="none" stroke="#666" stroke-width="2.3"/></svg><div class="a ms" style="left:844.8px;top:721px;line-height:14px;letter-spacing:-0.538px;">Retract [mm]</div><div class="num ms" style="left:950px;top:719px;width:53px;height:20px"><span>10</span><i></i><b></b></div><div class="btn" style="left:1011px;top:719px;width:48px;height:21px;"></div><svg class="a" style="left:1026px;top:722px" width="18" height="15" viewBox="0 0 18 15"><path d="M9 13.5V3.5M4 8L9 3L14 8" fill="none" stroke="#666" stroke-width="2.3"/></svg><div class="grp" style="left:1078px;top:592px;width:220px;height:71px"></div><div class="a ms" style="left:1087.0px;top:584.5px;line-height:14px;letter-spacing:-0.548px;background:#f0f0f0;padding:0 2px;margin-left:-2px">Printbed</div><div class="btn" style="left:1085px;top:605px;width:178px;height:21px;"></div><div class="a ms" style="left:1140.6px;top:608.5px;line-height:14px;letter-spacing:-0.447px;">Heat Printbed</div><div class="led on" style="left:1088px;top:609px"></div><div class="a ms" style="left:1087.0px;top:636.5px;line-height:14px;letter-spacing:-0.336px;">Temp.</div><div class="a ms" style="left:1129.1px;top:636.5px;line-height:14px;letter-spacing:-0.119px;">67.43°C /</div><div class="num ms" style="left:1192px;top:634px;width:54px;height:20px"><span>90</span><i></i><b></b></div><div class="grp" style="left:1078px;top:676px;width:220px;height:79px"></div><div class="a ms" style="left:1087.0px;top:668.5px;line-height:14px;letter-spacing:-0.728px;background:#f0f0f0;padding:0 2px;margin-left:-2px">Fan</div><div class="btn" style="left:1085px;top:689px;width:98px;height:21px;"></div><div class="a ms" style="left:1157.5px;top:692.5px;line-height:14px;letter-spacing:-0.661px;">Fan</div><div class="led on" style="left:1088px;top:693px"></div><div class="a ms" style="left:1191.0px;top:692.5px;line-height:14px;letter-spacing:-0.451px;">Output 50.2%</div><div class="trk" style="left:1088px;top:727px;width:89px;background:linear-gradient(#e4e4e4 0,#cacaca 20%,#a2a2a2 45%,#a6a6a6 55%,#cecece 80%,#e6e6e6 100%)"></div><div class="trk" style="left:1177px;top:727px;width:123px;background:linear-gradient(#e2e2e2 0,#a8a8a8 20%,#4e4e4e 45%,#545454 55%,#b0b0b0 80%,#e4e4e4 100%)"></div><div class="thumb" style="left:1170px;top:717.8px"></div><div class="grp" style="left:833px;top:765px;width:450px;height:42px"></div><div class="a ms" style="left:841.8px;top:757.5px;line-height:14px;letter-spacing:-0.503px;background:#f0f0f0;padding:0 2px;margin-left:-2px">Debug Options</div><div class="btn" style="left:843px;top:778px;width:88px;height:21px;"></div><div class="a ms" style="left:873.8px;top:781.5px;line-height:14px;letter-spacing:-0.409px;">Echo</div><div class="led on" style="left:847px;top:782px"></div><div class="btn" style="left:933px;top:778px;width:88px;height:21px;"></div><div class="a ms" style="left:966.7px;top:781.5px;line-height:14px;letter-spacing:-0.461px;">Info</div><div class="led off" style="left:937px;top:782px"></div><div class="btn" style="left:1024px;top:778px;width:88px;height:21px;"></div><div class="a ms" style="left:1053.7px;top:781.5px;line-height:14px;letter-spacing:-0.677px;">Errors</div><div class="led off" style="left:1028px;top:782px"></div><div class="btn" style="left:1114px;top:778px;width:100px;height:21px;"></div><div class="a ms" style="left:1143.7px;top:781.5px;line-height:14px;letter-spacing:-0.533px;">Dry Run</div><div class="led on" style="left:1118px;top:782px"></div><div class="btn" style="left:1232px;top:778px;width:31px;height:21px;"></div><div class="a ms" style="left:1238.4px;top:781.5px;line-height:14px;letter-spacing:-0.533px;">OK</div><div class="a" style="left:829px;top:978px;width:435px;height:17px;background:#f0f0f0"></div><div class="a" style="left:852px;top:979px;width:384px;height:15px;border:1px solid #979797;border-radius:2px;background:linear-gradient(#f3f3f3 0,#e8e8e9 45%,#d5d5d7 50%,#c5c5c8 100%);box-shadow:inset 0 0 0 1px rgba(255,255,255,.6)"></div><div class="a" style="left:1040px;top:983px;width:1px;height:7px;background:#555;box-shadow:2px 0 0 #555,4px 0 0 #555"></div><div class="a" style="left:835px;top:983px;border:3.5px solid transparent;border-left:0;border-right:4px solid #333"></div><div class="a" style="left:1253px;top:983px;border:3.5px solid transparent;border-right:0;border-left:4px solid #333"></div></div>
<div class="a" style="left:8px;top:1007px;width:1264px;height:1px;background:#6a6a6a"></div><div class="a ms" style="left:15.1px;top:1013px;line-height:14px;letter-spacing:-0.421px;">Show in Log:</div><div class="led on" style="left:91.6px;top:1014px"></div><div class="a ms" style="left:105.1px;top:1013px;line-height:14px;letter-spacing:-0.835px;">Commands</div><div class="led off" style="left:181.5px;top:1014px"></div><div class="a ms" style="left:195.4px;top:1013px;line-height:14px;letter-spacing:-0.388px;">Infos</div><div class="led off" style="left:242px;top:1014px"></div><div class="a ms" style="left:256.4px;top:1013px;line-height:14px;letter-spacing:-0.443px;">Warnings</div><div class="led off" style="left:325.2px;top:1014px"></div><div class="a ms" style="left:339.5px;top:1013px;line-height:14px;letter-spacing:-0.760px;">Errors</div><div class="led on" style="left:390.9px;top:1014px"></div><div class="a ms" style="left:405.1px;top:1013px;line-height:14px;letter-spacing:-0.948px;">ACK</div><div class="led off" style="left:449.3px;top:1014px"></div><div class="a ms" style="left:463.5px;top:1013px;line-height:14px;letter-spacing:-0.460px;">Auto Scroll</div><svg class="a" style="left:541px;top:1013px" width="12" height="14" viewBox="0 0 12 14"><path d="M4 1.5H8M1 3H11M2.3 4.5V13H9.7V4.5M4.5 5.5V11.5M6 5.5V11.5M7.5 5.5V11.5" fill="none" stroke="#555" stroke-width="1.1"/></svg><div class="a ms" style="left:555.8px;top:1013px;line-height:14px;letter-spacing:-0.503px;">Clear Log</div><svg class="a" style="left:624px;top:1013px" width="14" height="14" viewBox="0 0 14 14"><rect x="1" y="2.5" width="7" height="8.5" rx="1" fill="#fff" stroke="#555" stroke-width="1.1"/><rect x="5.5" y="4.5" width="7" height="8.5" rx="1" fill="#fff" stroke="#555" stroke-width="1.1"/><rect x="3" y="1" width="3" height="2.4" fill="#777"/></svg><div class="a ms" style="left:640.1px;top:1013px;line-height:14px;letter-spacing:-0.670px;">Copy</div><div class="a mono" style="left:9px;top:1033px;width:1245px;height:376px;overflow:hidden;background:#fff;font-size:12.36px;line-height:16px;white-space:nowrap"><div class="a" style="left:0;top:0;width:102px;height:376px;background:#5f9ea0"></div><div class="a" style="left:102px;top:0px;width:1143px;height:16px;background:#fff"></div><div class="a" style="left:5.4px;top:1px;color:#fff">16:25:19.632</div><div class="a" style="left:108px;top:1px;color:#9a1a1a">A device attached to the system is not functioning.</div><div class="a" style="left:102px;top:16px;width:1143px;height:16px;background:#fbefe4"></div><div class="a" style="left:5.4px;top:17px;color:#fff">16:25:39.305</div><div class="a" style="left:108px;top:17px;color:#1a1a96">start</div><div class="a" style="left:102px;top:32px;width:1143px;height:16px;background:#fff"></div><div class="a" style="left:5.4px;top:33px;color:#fff">16:25:39.442</div><div class="a" style="left:108px;top:33px;color:#1a1a96">External Reset</div><div class="a" style="left:102px;top:48px;width:1143px;height:16px;background:#fbefe4"></div><div class="a" style="left:5.4px;top:49px;color:#fff">16:25:40.469</div><div class="a" style="left:108px;top:49px;color:#1a1a96">FIRMWARE_NAME:Repetier_0.80 FIRMWARE_URL:https:<span>//</span>github.com/repetier/Repetier-Firmware/ PROTOCOL_VERSION:1.0 MACHINE_TYPE:Rostock EXTRUDER_COUNT:1 REPETIER_PROTOCOL:2</div><div class="a" style="left:102px;top:64px;width:1143px;height:16px;background:#fff"></div><div class="a" style="left:5.4px;top:65px;color:#fff">16:25:40.469</div><div class="a" style="left:108px;top:65px;color:#1a1a96">Printed filament:858.82 m</div><div class="a" style="left:102px;top:80px;width:1143px;height:16px;background:#fbefe4"></div><div class="a" style="left:5.4px;top:81px;color:#fff">16:25:40.469</div><div class="a" style="left:108px;top:81px;color:#1a1a96">Printing time:22 days 10 hours 26 min</div><div class="a" style="left:102px;top:96px;width:1143px;height:16px;background:#fff"></div><div class="a" style="left:5.4px;top:97px;color:#fff">16:25:42.879</div><div class="a" style="left:108px;top:97px;color:#1a1a96">FIRMWARE_NAME:Repetier_0.80 FIRMWARE_URL:https:<span>//</span>github.com/repetier/Repetier-Firmware/ PROTOCOL_VERSION:1.0 MACHINE_TYPE:Rostock EXTRUDER_COUNT:1 REPETIER_PROTOCOL:2</div><div class="a" style="left:102px;top:112px;width:1143px;height:16px;background:#fbefe4"></div><div class="a" style="left:5.4px;top:113px;color:#fff">16:25:42.879</div><div class="a" style="left:108px;top:113px;color:#1a1a96">Printed filament:858.82 m</div><div class="a" style="left:102px;top:128px;width:1143px;height:16px;background:#fff"></div><div class="a" style="left:5.4px;top:129px;color:#fff">16:25:42.879</div><div class="a" style="left:108px;top:129px;color:#1a1a96">Printing time:22 days 10 hours 26 min</div><div class="a" style="left:102px;top:144px;width:1143px;height:16px;background:#fbefe4"></div><div class="a" style="left:5.4px;top:145px;color:#fff">16:30:55.829</div><div class="a" style="left:108px;top:145px;color:#1a1a96">start</div><div class="a" style="left:102px;top:160px;width:1143px;height:16px;background:#fff"></div><div class="a" style="left:5.4px;top:161px;color:#fff">16:30:56.006</div><div class="a" style="left:108px;top:161px;color:#1a1a96">External Reset</div><div class="a" style="left:102px;top:176px;width:1143px;height:16px;background:#fbefe4"></div><div class="a" style="left:5.4px;top:177px;color:#fff">16:30:56.383</div><div class="a" style="left:108px;top:177px;color:#1a1a96">FIRMWARE_NAME:Repetier_0.80 FIRMWARE_URL:https:<span>//</span>github.com/repetier/Repetier-Firmware/ PROTOCOL_VERSION:1.0 MACHINE_TYPE:Rostock EXTRUDER_COUNT:1 REPETIER_PROTOCOL:2</div><div class="a" style="left:102px;top:192px;width:1143px;height:16px;background:#fff"></div><div class="a" style="left:5.4px;top:193px;color:#fff">16:30:56.383</div><div class="a" style="left:108px;top:193px;color:#1a1a96">Printed filament:858.82 m</div><div class="a" style="left:102px;top:208px;width:1143px;height:16px;background:#fbefe4"></div><div class="a" style="left:5.4px;top:209px;color:#fff">16:30:56.383</div><div class="a" style="left:108px;top:209px;color:#1a1a96">Printing time:22 days 10 hours 26 min</div><div class="a" style="left:102px;top:224px;width:1143px;height:16px;background:#fff"></div><div class="a" style="left:5.4px;top:225px;color:#fff">16:31:02.310</div><div class="a" style="left:108px;top:225px;color:#1a1a96">start</div><div class="a" style="left:102px;top:240px;width:1143px;height:16px;background:#fbefe4"></div><div class="a" style="left:5.4px;top:241px;color:#fff">16:31:08.131</div><div class="a" style="left:108px;top:241px;color:#1a1a96">start</div><div class="a" style="left:102px;top:256px;width:1143px;height:16px;background:#fff"></div><div class="a" style="left:5.4px;top:257px;color:#fff">16:31:08.307</div><div class="a" style="left:108px;top:257px;color:#1a1a96">External Reset</div><div class="a" style="left:102px;top:272px;width:1143px;height:16px;background:#fbefe4"></div><div class="a" style="left:5.4px;top:273px;color:#fff">16:31:08.625</div><div class="a" style="left:108px;top:273px;color:#1a1a96">FIRMWARE_NAME:Repetier_0.80 FIRMWARE_URL:https:<span>//</span>github.com/repetier/Repetier-Firmware/ PROTOCOL_VERSION:1.0 MACHINE_TYPE:Rostock EXTRUDER_COUNT:1 REPETIER_PROTOCOL:2</div><div class="a" style="left:102px;top:288px;width:1143px;height:16px;background:#fff"></div><div class="a" style="left:5.4px;top:289px;color:#fff">16:31:08.625</div><div class="a" style="left:108px;top:289px;color:#1a1a96">Printed filament:858.82 m</div><div class="a" style="left:102px;top:304px;width:1143px;height:16px;background:#fbefe4"></div><div class="a" style="left:5.4px;top:305px;color:#fff">16:31:08.625</div><div class="a" style="left:108px;top:305px;color:#1a1a96">Printing time:22 days 10 hours 26 min</div><div class="a" style="left:102px;top:320px;width:1143px;height:16px;background:#fff"></div><div class="a" style="left:5.4px;top:321px;color:#fff">16:31:52.873</div><div class="a" style="left:108px;top:321px;color:#1a1a96">extruder 0: temp sensor defect</div><div class="a" style="left:102px;top:336px;width:1143px;height:16px;background:#fbefe4"></div><div class="a" style="left:5.4px;top:337px;color:#fff">16:31:52.877</div><div class="a" style="left:108px;top:337px;color:#1a1a96">heated bed: working</div><div class="a" style="left:102px;top:352px;width:1143px;height:16px;background:#fff"></div><div class="a" style="left:5.4px;top:353px;color:#fff">16:31:52.877</div><div class="a" style="left:108px;top:353px;color:#1a1a96">Printer set into dry run mode until restart!</div></div><div class="a" style="left:1254px;top:1033px;width:18px;height:376px;background:linear-gradient(90deg,#e8e8e8,#f4f4f4 30%,#f4f4f4)"></div><div class="a" style="left:1255px;top:1050px;width:16px;height:339px;border:1px solid #979797;border-radius:2px;background:linear-gradient(90deg,#f3f3f3 0,#e8e8e9 45%,#d5d5d7 50%,#c5c5c8 100%);box-shadow:inset 0 0 0 1px rgba(255,255,255,.6)"></div><div class="a" style="left:1259px;top:1217px;width:8px;height:1px;background:#555;box-shadow:0 2px 0 #555,0 4px 0 #555"></div><div class="a" style="left:1259.5px;top:1039px;border:3.5px solid transparent;border-top:0;border-bottom:4px solid #333"></div><div class="a" style="left:1259.5px;top:1398px;border:3.5px solid transparent;border-bottom:0;border-top:4px solid #333"></div><div class="a" style="left:8px;top:1409px;width:1264px;height:1.5px;background:#6a6a6a"></div><div class="a" style="left:8px;top:1412px;width:1264px;height:18px;background:#f1eded"></div><div class="a ui" style="left:12.0px;top:1415px;line-height:15px;letter-spacing:-0.108px;white-space:pre">Connected:Rosktock MAX  Extruder: -20.00°C/Off Bed: 67.43°C/Off</div><div class="a ui" style="left:378.0px;top:1415px;line-height:15px;letter-spacing:0.161px;">1 Command Waiting</div><div class="a" style="left:494px;top:1413px;width:213px;height:16px;border:1px solid #b2b2b2;border-radius:2px;background:linear-gradient(#dcdcdc,#e9e9e9 40%,#cfcfcf)"></div><div class="a ui" style="left:712.0px;top:1415px;line-height:15px;letter-spacing:-0.365px;font-size:11px;">41 FPS</div><div class="a" style="left:1266px;top:1416px;width:2px;height:2px;background:#a0a0a0;box-shadow:0 4px 0 #a0a0a0,0 8px 0 #a0a0a0,-4px 4px 0 #a0a0a0,-4px 8px 0 #a0a0a0,-8px 8px 0 #a0a0a0"></div>
</body></html>
